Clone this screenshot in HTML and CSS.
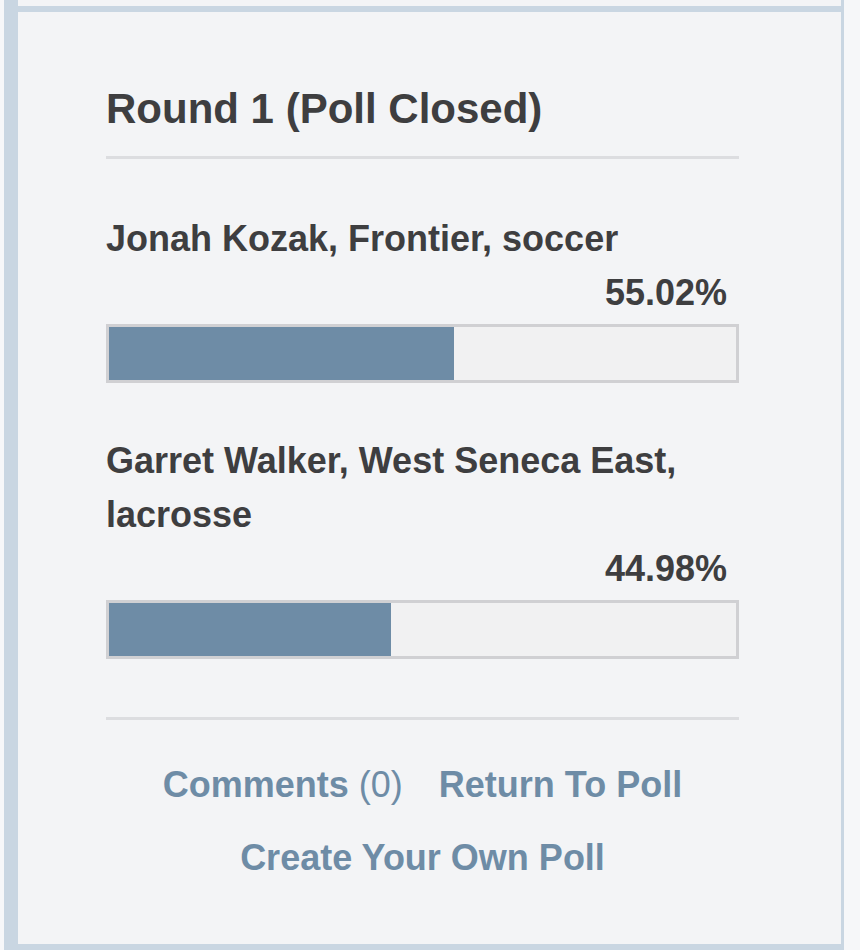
FILE: index.html
```html
<!DOCTYPE html>
<html lang="en">
<head>
    <meta charset="UTF-8">
    <meta name="viewport" content="width=device-width, initial-scale=1.0">
    <title>Round 1 (Poll Closed)</title>
    <link rel="stylesheet" href="styles.css">
</head>
<body>
    <div class="poll-frame">
        <div class="poll">
            <h2 class="poll-title">Round 1 (Poll Closed)</h2>
            <ul class="poll-results">
                <li class="choice">
                    <div class="choice-name">Jonah Kozak, Frontier, soccer</div>
                    <div class="choice-pct">55.02%</div>
                    <div class="bar"><div class="bar-fill" style="width: 55.02%"></div></div>
                </li>
                <li class="choice">
                    <div class="choice-name">Garret Walker, West Seneca East, lacrosse</div>
                    <div class="choice-pct">44.98%</div>
                    <div class="bar"><div class="bar-fill" style="width: 44.98%"></div></div>
                </li>
            </ul>
            <div class="poll-links">
                <div class="links-row">
                    <a href="#">Comments <span class="count">(0)</span></a>
                    <a href="#">Return To Poll</a>
                </div>
                <div class="links-row">
                    <a href="#">Create Your Own Poll</a>
                </div>
            </div>
        </div>
    </div>
</body>
</html>
```

FILE: styles.css
```css
body { margin: 0; padding: 0 16px 0 4px; background: #f6f7f9; font-family: "Liberation Sans", Arial, sans-serif; color: #3e3e40; }
.poll-frame { background: #f3f4f6; border-left: 14px solid #c9d6e2; border-right: 3px solid #c9d6e2; border-bottom: 6px solid #c9d6e2; padding-top: 6px; }
.poll { border-top: 6px solid #c9d6e2; padding: 73px 102px 59px 88px; }
.poll-title { margin: 0; font-size: 42px; line-height: 48px; font-weight: bold; padding-bottom: 23px; border-bottom: 3px solid #dcdde0; }
.poll-results { list-style: none; margin: 0; padding: 53px 0 58px; border-bottom: 3px solid #dcdde0; }
.choice + .choice { margin-top: 51px; }
.choice-name, .choice-pct { font-size: 36px; line-height: 54px; font-weight: bold; }
.choice-pct { text-align: right; padding-right: 12px; }
.bar { margin-top: 4px; height: 59px; box-sizing: border-box; border: 3px solid #d0d0d3; background: #f1f1f2; }
.bar-fill { height: 100%; background: #6e8ca6; }
.poll-links { padding-top: 38px; }
.links-row { display: flex; justify-content: center; gap: 36px; }
.links-row + .links-row { margin-top: 19px; }
.links-row a { font-size: 36px; line-height: 54px; font-weight: bold; color: #6e8ca6; text-decoration: none; }
.links-row .count { font-weight: normal; }
```
